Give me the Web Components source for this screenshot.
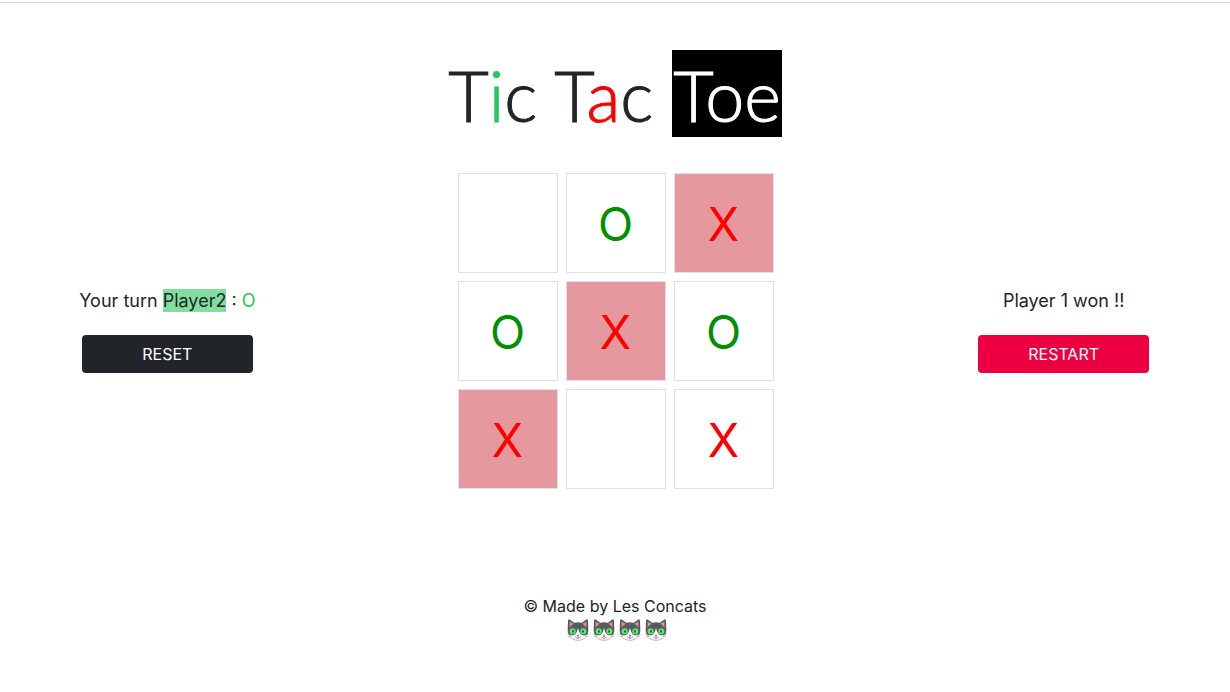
<!DOCTYPE html>
<html lang="en">
<head>
<meta charset="utf-8">
<meta name="viewport" content="width=device-width, initial-scale=1">
<title>Tic Tac Toe</title>
<style>
body{margin:0;background:#fff;color:#212529;font:16px/24px Inter,"Liberation Sans",sans-serif}
</style>
</head>
<body>
<tic-tac-toe></tic-tac-toe>
<script>
const define = (name, html) => customElements.define(name, class extends HTMLElement {
  constructor() {
    super();
    this.attachShadow({mode: 'open'}).innerHTML = html;
  }
});

define('game-title', `
<style>
:host{display:block;text-align:center}
h1{margin:0;font-family:Lato,"Liberation Sans",sans-serif;font-size:70px;line-height:84px;font-weight:300}
h1,h1 span{-webkit-text-stroke:1px currentColor}
.i{color:#22c95c}
.a{color:red}
.toe{display:inline-block;padding:3px 1px 0;background:#000;color:#fff}
</style>
<h1>T<span class="i">i</span>c T<span class="a">a</span>c <span class="toe">Toe</span></h1>`);

define('game-panel', `
<style>
:host{display:flex;flex-direction:column;align-items:center;gap:20px;padding-bottom:2px}
p{margin:0;font-size:18px;line-height:28px;white-space:nowrap}
button{width:171px;height:38px;padding:0;border:0;border-radius:4px;background:var(--button,#212529);color:#fff;font:inherit;cursor:pointer}
</style>
<p><slot></slot></p>
<button type="button"><slot name="action"></slot></button>`);

customElements.define('game-cell', class extends HTMLElement {
  connectedCallback() {
    const mark = this.getAttribute('mark') || '';
    this.attachShadow({mode: 'open'}).innerHTML = `
<style>
:host{display:block}
button{display:block;box-sizing:border-box;width:100px;height:100px;padding:2px 0 0;border:1px solid #dee2e6;background:#fff;color:red;font:46px/96px Inter,"Liberation Sans",sans-serif;cursor:pointer}
:host([mark="O"]) button{color:#009000}
:host([win]) button{background:#e5999f}
</style>
<button type="button" aria-label="${mark || 'Empty'}">${mark}</button>`;
  }
});

define('game-board', `
<style>
:host{display:grid;grid-template-columns:repeat(3,max-content);gap:8px;justify-content:center}
</style>
<game-cell></game-cell><game-cell mark="O"></game-cell><game-cell mark="X" win></game-cell>
<game-cell mark="O"></game-cell><game-cell mark="X" win></game-cell><game-cell mark="O"></game-cell>
<game-cell mark="X" win></game-cell><game-cell></game-cell><game-cell mark="X"></game-cell>`);

define('cat-face', `
<style>:host{display:block}svg{display:block;width:22px;height:22px}</style>
<svg viewBox="0 0 66 66" aria-hidden="true">
<path d="M3 5Q4 -1 9 2L22 11Q33 8 44 11L57 2Q62 -1 63 5L64 35Q64 47 55 55Q45 64 33 64Q21 64 11 55Q2 47 2 35Z" fill="#535c63"/>
<path d="M8 8L20 14Q12 18 8 26ZM58 8L46 14Q54 18 58 26Z" fill="#fb8588"/>
<path d="M33 27Q35 40 43 47Q52 50 60 47Q54 58 43 62Q33 65 23 62Q12 58 6 47Q14 50 23 47Q31 40 33 27Z" fill="#fff"/>
<path d="M1 46H11M3 54L13 50M65 46H55M63 54L53 50" stroke="#9aa1a5" stroke-width="2"/>
<path d="M12 57Q21 64 33 64Q45 64 54 57" fill="none" stroke="#a4abb0" stroke-width="2"/>
<circle cx="17" cy="37" r="9" fill="#58f068"/><circle cx="49" cy="37" r="9" fill="#58f068"/>
<ellipse cx="18" cy="37" rx="2" ry="5" fill="#26352b"/><ellipse cx="48" cy="37" rx="2" ry="5" fill="#26352b"/>
<path d="M29 47H37L33 51Z" fill="#444a50"/>
<path d="M33 50V54M24 54Q29 57 33 53Q37 57 42 54" fill="none" stroke="#6c747a" stroke-width="2"/>
<path d="M29 56H37Q37 61 33 61Q29 61 29 56Z" fill="#fb7f99"/>
</svg>`);

define('game-footer', `
<style>
:host{display:flex;flex-direction:column;align-items:center}
p{margin:0}
.cats{display:flex;gap:4px;padding:1px 0 0 4px}
</style>
<p>© Made by Les Concats</p>
<div class="cats"><cat-face></cat-face><cat-face></cat-face><cat-face></cat-face><cat-face></cat-face></div>`);

define('tic-tac-toe', `
<style>
:host{display:block;padding-top:2px}
header{border-top:1px solid #dcdcdc;padding:47px 0 36px}
main{display:grid;grid-template-columns:1fr 2fr 1fr;align-items:center;padding:0 17px 0 18px}
.player{display:inline-block;line-height:23px;background:#80df9f}
.mark{color:#22c95c}
game-panel.won{--button:#ec0040}
footer{padding:105px 0 48px}
</style>
<header><game-title></game-title></header>
<main>
<game-panel>Your turn <span class="player">Player2</span> : <span class="mark">O</span><span slot="action">RESET</span></game-panel>
<game-board></game-board>
<game-panel class="won">Player 1 won !!<span slot="action">RESTART</span></game-panel>
</main>
<footer><game-footer></game-footer></footer>`);
</script>
</body>
</html>
